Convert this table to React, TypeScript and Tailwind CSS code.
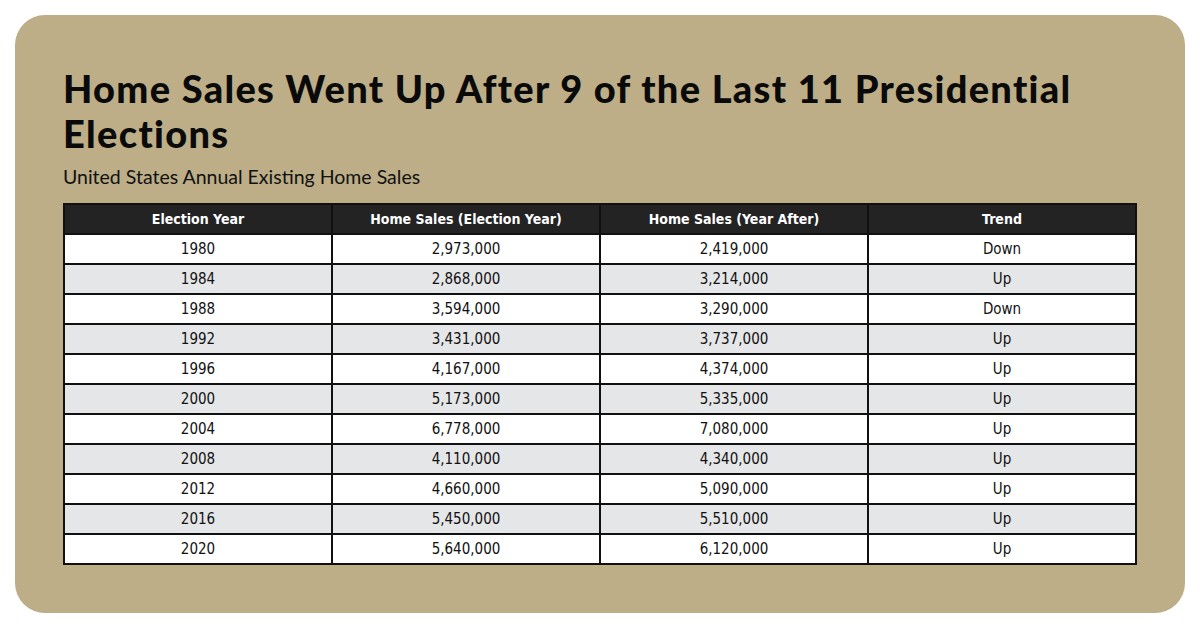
import React from "react";

const rows: [string, string, string, string][] = [
  ["1980", "2,973,000", "2,419,000", "Down"],
  ["1984", "2,868,000", "3,214,000", "Up"],
  ["1988", "3,594,000", "3,290,000", "Down"],
  ["1992", "3,431,000", "3,737,000", "Up"],
  ["1996", "4,167,000", "4,374,000", "Up"],
  ["2000", "5,173,000", "5,335,000", "Up"],
  ["2004", "6,778,000", "7,080,000", "Up"],
  ["2008", "4,110,000", "4,340,000", "Up"],
  ["2012", "4,660,000", "5,090,000", "Up"],
  ["2016", "5,450,000", "5,510,000", "Up"],
  ["2020", "5,640,000", "6,120,000", "Up"],
];

const headers = ["Election Year", "Home Sales (Election Year)", "Home Sales (Year After)", "Trend"];

export default function App() {
  return (
    <div className="w-[1200px] h-[628px] bg-white p-[15px]">
      <div className="h-full rounded-[30px] bg-[#bdae88] px-[48px] pt-[51px]">
        <h1 className="font-['Lato',sans-serif] font-black text-[38px] leading-[45px] text-[#0a0a0a] tracking-[1.3px]">
          Home Sales Went Up After 9 of the Last 11 Presidential Elections
        </h1>
        <p className="mt-[9px] font-['Lato',sans-serif] text-[19.5px] leading-[24px] text-[#111]">
          United States Annual Existing Home Sales
        </p>
        <table className="mt-[14px] w-full border-collapse border-2 border-[#111] table-fixed font-['Liberation_Sans_Narrow','DejaVu_Sans_Condensed','Roboto',sans-serif] [font-stretch:condensed]">
          <thead>
            <tr className="h-[30px] bg-[#232323]">
              {headers.map((h) => (
                <th key={h} className="border-2 border-[#111] text-center text-white font-bold text-[14px] p-0">
                  {h}
                </th>
              ))}
            </tr>
          </thead>
          <tbody>
            {rows.map((r, i) => (
              <tr key={r[0]} className={`h-[30px] ${i % 2 === 1 ? "bg-[#e5e6e8]" : "bg-white"}`}>
                {r.map((c, j) => (
                  <td key={j} className="border-2 border-[#111] text-center text-[15px] text-[#111] p-0">
                    {c}
                  </td>
                ))}
              </tr>
            ))}
          </tbody>
        </table>
      </div>
    </div>
  );
}
